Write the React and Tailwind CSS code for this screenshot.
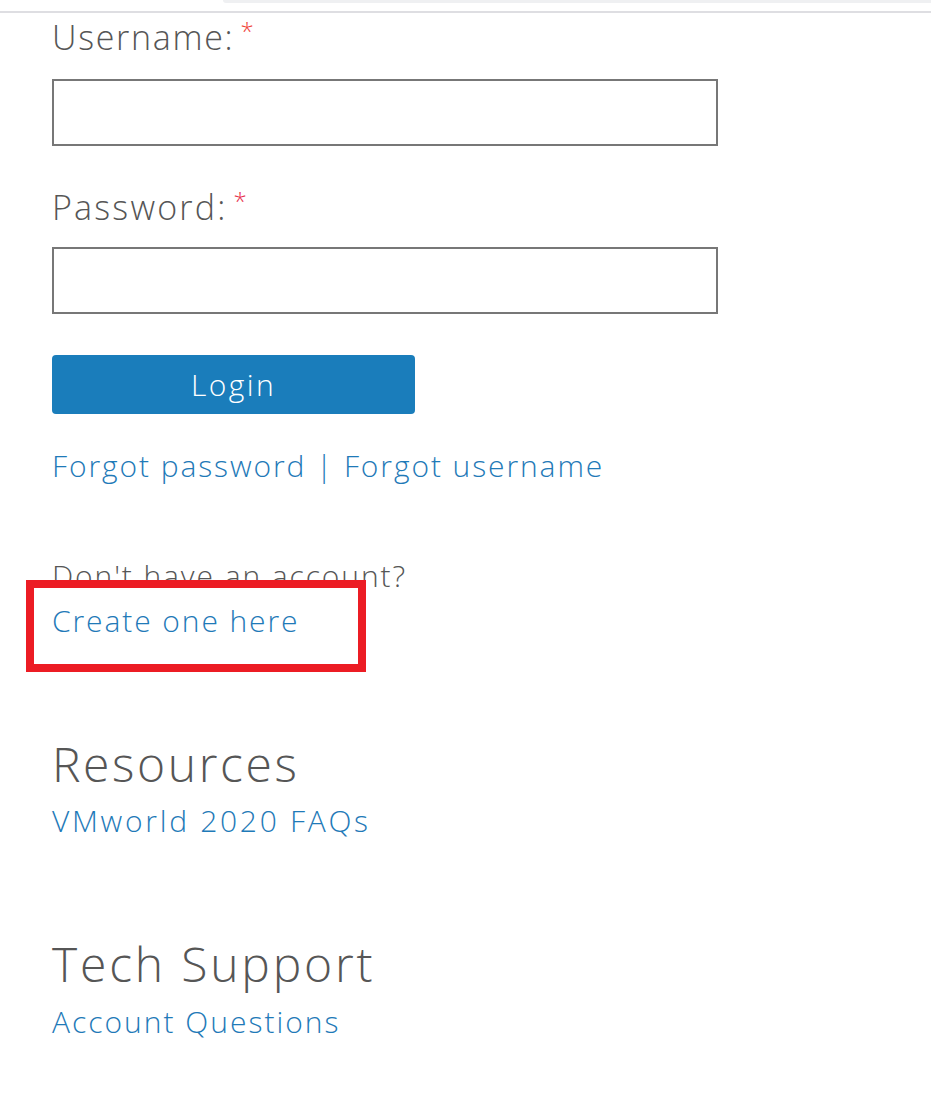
export default function App() {
  return (
    <div className="min-h-[1111px] bg-white font-['Open_Sans',sans-serif] font-light tracking-[1.9px]">
      <div className="h-[11px]">
        <div className="ml-[223px] h-[3px] rounded-bl-[12px] bg-[#eff0f2]" />
      </div>
      <div className="h-[2px] bg-[#dedee2]" />

      <div className="pl-[52px] pt-[4px]">
        <form onSubmit={(e) => e.preventDefault()}>
          <label className="block text-[34px] leading-[40px] tracking-[1.7px] text-[#565656]">
            Username:
            <span className="relative top-[-6px] ml-[6px] align-top text-[24px] leading-[40px] text-[#f0443a]">*</span>
          </label>
          <input
            type="text"
            className="mt-[22px] block h-[67px] w-[666px] border-2 border-[#777] bg-white px-3 outline-none"
          />

          <label className="mt-[41px] block text-[34px] leading-[40px] tracking-[2.2px] text-[#565656]">
            Password:
            <span className="relative top-[-6px] ml-[6px] align-top text-[24px] leading-[40px] text-[#e8334f]">*</span>
          </label>
          <input
            type="password"
            className="mt-[20px] block h-[67px] w-[666px] border-2 border-[#777] bg-white px-3 outline-none"
          />

          <button
            type="submit"
            className="mt-[41px] block h-[59px] w-[363px] rounded-[4px] bg-[#1a7dbb] text-[30px] font-light tracking-[2.4px] text-white"
          >
            Login
          </button>
        </form>

        <p className="mt-[34px] text-[30px] leading-[36px] text-[#1f7ab8]">
          <a href="#">Forgot password</a>
          <span> | </span>
          <a href="#">Forgot username</a>
        </p>

        <p className="mt-[74px] text-[30px] leading-[36px] text-[#565656]">Don't have an account?</p>
        <div className="relative mt-[9px] w-fit">
          <a href="#" className="block text-[30px] leading-[36px] text-[#1f7ab8]">
            Create one here
          </a>
          <div className="pointer-events-none absolute left-[-26px] top-[-23px] h-[92px] w-[340px] border-[8px] border-[#ec1c24]" />
        </div>

        <h2 className="mt-[97px] text-[48px] leading-[56px] tracking-[2.6px] text-[#565656]">Resources</h2>
        <a href="#" className="mt-[11px] block text-[30px] leading-[36px] tracking-[2.7px] text-[#1f7ab8]">
          VMworld 2020 FAQs
        </a>

        <h2 className="mt-[97px] text-[48px] leading-[56px] tracking-[2.8px] text-[#565656]">Tech Support</h2>
        <a href="#" className="mt-[12px] block text-[30px] leading-[36px] tracking-[2px] text-[#1f7ab8]">
          Account Questions
        </a>
      </div>
    </div>
  );
}
